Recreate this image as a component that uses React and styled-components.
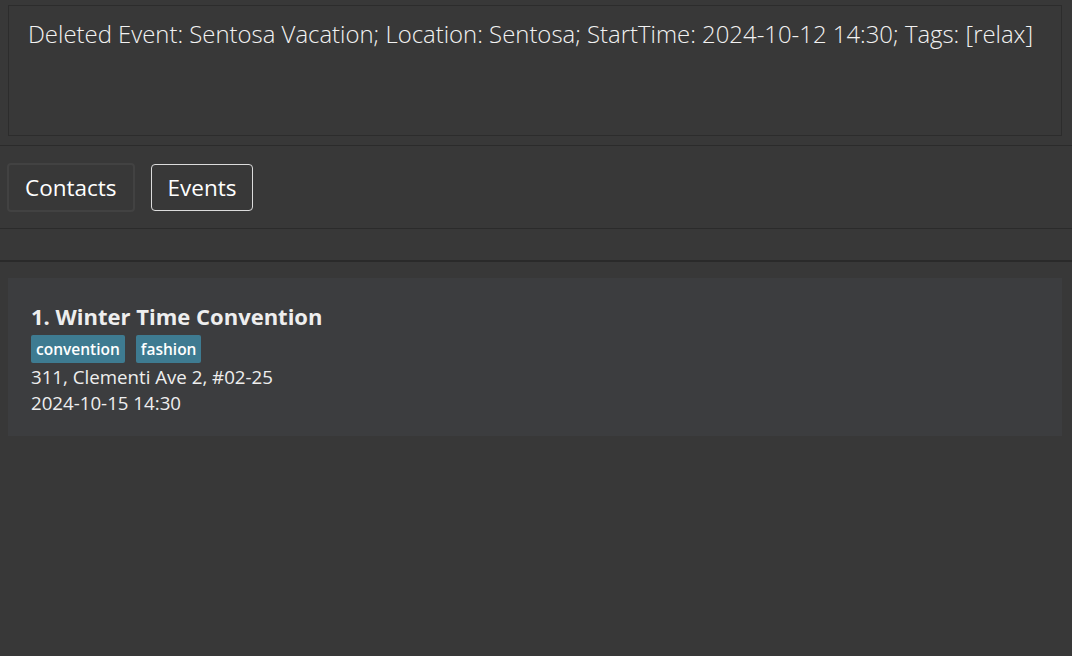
import React from "react";
import styled, { createGlobalStyle } from "styled-components";

const Global = createGlobalStyle`
  html, body { margin: 0; padding: 0; background: #383838; }
  body { font-family: "Open Sans", "Noto Sans", sans-serif; color: #eeeeee; }
  #root { width: 1072px; height: 656px; overflow: hidden; }
`;

const Page = styled.div`
  display: flex;
  flex-direction: column;
  width: 1072px;
  height: 656px;
  background: #383838;
`;

const ResultSection = styled.div`
  padding: 5px 10px 9px 8px;
  border-bottom: 1px solid #2b2b2b;
`;

const ResultBox = styled.div`
  border: 1px solid #2c2c2c;
  box-sizing: border-box;
  height: 131px;
  padding: 11px 19px;
  font-family: "Open Sans", sans-serif;
  font-weight: 300;
  font-size: 23.9px;
  color: #f2f2f2;
  white-space: nowrap;
`;

const TabBar = styled.div`
  display: flex;
  gap: 16px;
  align-items: center;
  height: 83px;
  padding: 0 7px;
  box-sizing: border-box;
  border-bottom: 1px solid #2b2b2b;
`;

const TabButton = styled.button`
  height: ${(p) => (p.$active ? 49 : 47)}px;
  padding: 0 16px;
  background: #383838;
  border: ${(p) => (p.$active ? "2px solid #424242" : "1px solid #dcdcdc")};
  border-radius: 4px;
  color: #ffffff;
  font-family: "Open Sans", sans-serif;
  font-size: 22.5px;
  font-weight: 400;
`;

const Spacer = styled.div`
  height: 31px;
  border-bottom: 2px solid #2a2a2a;
`;

const ListArea = styled.div`
  flex: 1;
  padding: 16px 10px 0 8px;
`;

const Card = styled.div`
  background: #3c3d3f;
  padding: 24px 23px 20px;
  display: flex;
  flex-direction: column;
`;

const Title = styled.div`
  font-size: 22px;
  font-weight: 700;
  color: #eeeeee;
  line-height: 28px;
`;

const Tags = styled.div`
  display: flex;
  gap: 11px;
  margin: 5px 0 1px;
`;

const Tag = styled.span`
  background: #3e7b91;
  color: #ffffff;
  font-size: 15.5px;
  font-weight: 600;
  border-radius: 2px;
  padding: 0 5px;
  height: 28px;
  line-height: 28px;
`;

const Line = styled.div`
  font-size: 18.7px;
  color: #eeeeee;
  line-height: 26px;
`;

export default function App() {
  return (
    <Page>
      <Global />
      <ResultSection>
        <ResultBox>
          Deleted Event: Sentosa Vacation; Location: Sentosa; StartTime: 2024-10-12 14:30; Tags: [relax]
        </ResultBox>
      </ResultSection>
      <TabBar>
        <TabButton $active>Contacts</TabButton>
        <TabButton>Events</TabButton>
      </TabBar>
      <Spacer />
      <ListArea>
        <Card>
          <Title>1. Winter Time Convention</Title>
          <Tags>
            <Tag>convention</Tag>
            <Tag>fashion</Tag>
          </Tags>
          <Line>311, Clementi Ave 2, #02-25</Line>
          <Line>2024-10-15 14:30</Line>
        </Card>
      </ListArea>
    </Page>
  );
}
